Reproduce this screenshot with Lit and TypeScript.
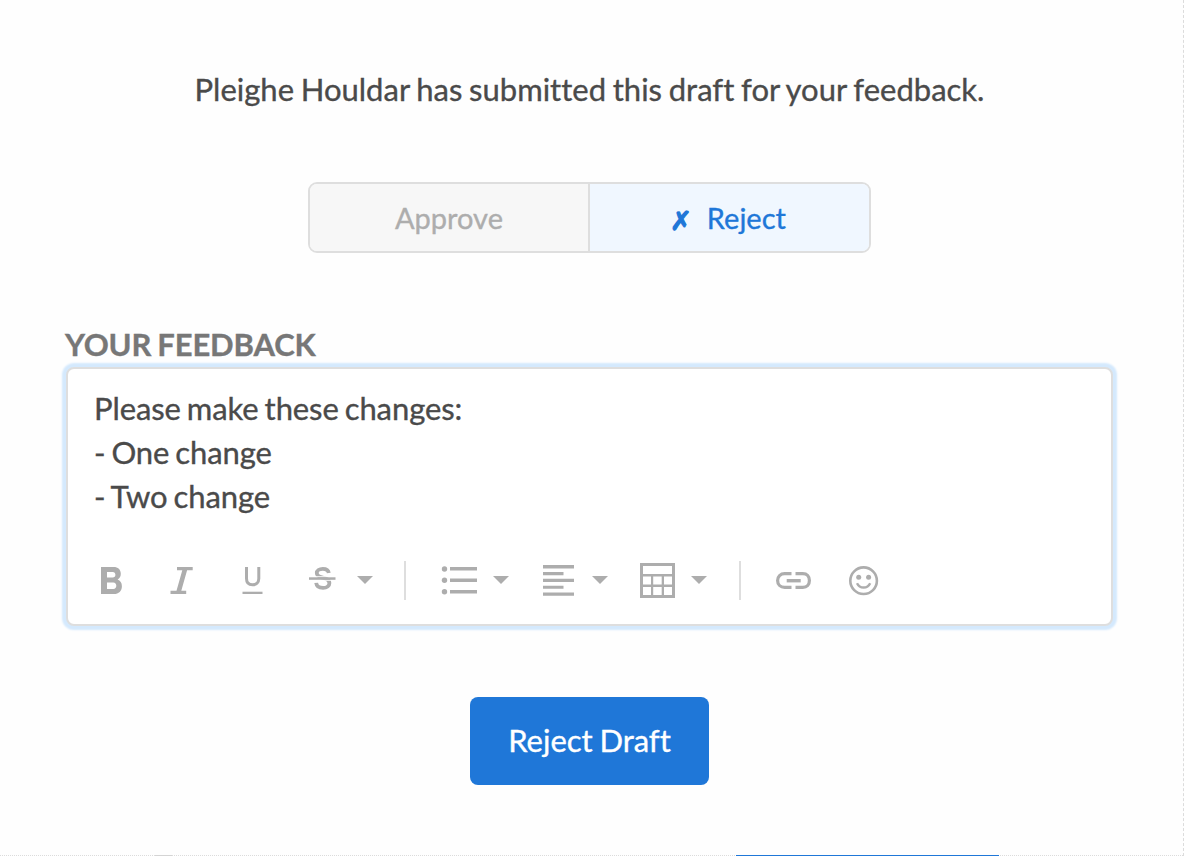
import { LitElement, html, svg, css, type TemplateResult, type SVGTemplateResult } from 'lit';
import { customElement, state } from 'lit/decorators.js';

type Decision = 'approve' | 'reject';

interface Tool {
  name: string;
  icon: SVGTemplateResult;
  menu?: boolean;
}

// Icons are drawn on a 36x40 grid
const BOLD: Tool = {
  name: 'Bold',
  icon: svg`<path fill-rule="evenodd" d="M6 7h12.5c4.600 0 7.300 2.600 7.300 6.700 0 2.700-1.200 4.700-3.200 5.900 2.700 1.100 4.300 3.300 4.300 6.600 0 4.700-3.100 7.800-8 7.800H6zM12 12v5.500h5.700c1.700 0 2.700-1 2.700-2.700s-1-2.800-2.700-2.800zM12 22.500v6.500h6.300c1.900 0 3-1.200 3-3.200s-1.100-3.300-3-3.300z"/>`
};

const ITALIC: Tool = {
  name: 'Italic',
  icon: svg`<path d="M12 7h15.700v3.300h-5.600l-5.800 20.400h4.900V34H5.500v-3.300h6l5.800-20.400H12z"/>`
};

const UNDERLINE: Tool = {
  name: 'Underline',
  icon: svg`
    <path class="stroke" stroke-width="3" d="M11.500 7v11.500c0 4 2.300 6.300 6 6.300s6.300-2.300 6.300-6.300V7"/>
    <path d="M7.500 31.700h20v2.300h-20z"/>`
};

const STRIKE: Tool = {
  name: 'Strikethrough',
  menu: true,
  icon: svg`
    <path class="stroke" stroke-width="3.800" d="M23.800 13c-.400-2.700-2.700-4.200-6-4.200-3.500 0-6 1.700-6 4.200 0 2.200 1.500 3.500 5 4.400l3.300 1c3.200 1 4.300 2.400 4.300 4.500 0 3-2.600 5-6.300 5-4 0-6.600-2-6.900-5"/>
    <path class="gap" d="M4 16.300h26v1H4zM4 19.800h26v1H4z"/>
    <path d="M4 17.300h26.500v2.500H4z"/>`
};

const LIST: Tool = {
  name: 'List',
  menu: true,
  icon: svg`
    <circle cx="3.500" cy="9" r="2.700"/><circle cx="3.500" cy="20.200" r="2.700"/><circle cx="3.500" cy="31.700" r="2.700"/>
    <path d="M9 7h27v3.500H9zM9 18.500h27v3.500H9zM9 30h27v3.500H9z"/>`
};

const ALIGN: Tool = {
  name: 'Align',
  menu: true,
  icon: svg`<path d="M3 5h31v3.500H3zM3 12h20.500v3.200H3zM3 18.800h31v3.200H3zM3 25.700h20.500v3H3zM3 32.400h31v3.300H3z"/>`
};

const TABLE: Tool = {
  name: 'Table',
  menu: true,
  icon: svg`<path fill-rule="evenodd" d="M1 3h35v35H1zM4 6v8h29V6zM4 16.500v8h8v-8zM14.200 16.500v8h8.500v-8zM25 16.500v8h8v-8zM4 27v8h8v-8zM14.200 27v8h8.500v-8zM25 27v8h8v-8z"/>`
};

const LINK: Tool = {
  name: 'Link',
  icon: svg`
    <path class="stroke" stroke-width="3.200" d="M15.500 13.600H8.700c-4.300 0-7.100 2.900-7.100 6.900s2.800 6.900 7.100 6.900h6.800M19.500 13.600h7.300c4.300 0 6.600 2.900 6.600 6.900s-2.300 6.900-6.600 6.900h-7.300"/>
    <path d="M10.700 19h14v3.400h-14z"/>`
};

const EMOJI: Tool = {
  name: 'Emoji',
  icon: svg`
    <circle class="stroke" stroke-width="2.600" cx="17.600" cy="20.700" r="13.300"/>
    <circle cx="12.700" cy="17.200" r="2.500"/><circle cx="22.600" cy="17.200" r="2.500"/>
    <path class="stroke" stroke-width="2.400" d="M11 23.200c1.400 2.900 3.700 4.300 6.600 4.300s5.200-1.400 6.600-4.300"/>`
};

/**
 * Review form for a submitted draft: approve/reject toggle, feedback editor
 * and the submit button.
 */
@customElement('app-root')
export class DraftReviewElement extends LitElement {
  @state()
  private _decision: Decision = 'reject';

  @state()
  private _lines = ['Please make these changes:', '- One change', '- Two change'];

  private _choose(decision: Decision) {
    this._decision = decision;
  }

  // ========================================
  // Render Methods
  // ========================================

  private _renderChoice(decision: Decision, label: string): TemplateResult {
    const selected = this._decision === decision;
    return html`
      <button
        class="choice ${selected ? 'selected' : ''}"
        aria-pressed=${selected}
        @click=${() => this._choose(decision)}
      >${selected ? html`<span class="mark">${decision === 'reject' ? '✗' : '✓'}</span>` : ''}<span>${label}</span></button>
    `;
  }

  private _renderTool(tool: Tool): TemplateResult {
    return html`
      <button class="tool ${tool.menu ? 'menu' : ''}" aria-label=${tool.name}>
        <svg width="36" height="40" viewBox="0 0 36 40">${tool.icon}</svg>
        ${tool.menu ? html`
          <svg class="caret" width="16" height="8" viewBox="0 0 16 8"><path d="M0 0h16L8 8z"/></svg>
        ` : ''}
      </button>
    `;
  }

  private _renderToolbar(): TemplateResult {
    return html`
      <div class="toolbar" role="toolbar">
        ${[BOLD, ITALIC, UNDERLINE, STRIKE].map(t => this._renderTool(t))}
        <span class="separator"></span>
        ${[LIST, ALIGN, TABLE].map(t => this._renderTool(t))}
        <span class="separator"></span>
        ${[LINK, EMOJI].map(t => this._renderTool(t))}
      </div>
    `;
  }

  override render() {
    return html`
      <main class="panel">
        <p class="intro">Pleighe Houldar has submitted this draft for your feedback.</p>
        <div class="choices">
          ${this._renderChoice('approve', 'Approve')}
          ${this._renderChoice('reject', 'Reject')}
        </div>
        <section class="feedback">
          <h2>YOUR FEEDBACK</h2>
          <div class="editor">
            <div class="text">${this._lines.map(line => html`<div>${line}</div>`)}</div>
            ${this._renderToolbar()}
          </div>
        </section>
        <button class="submit">${this._decision === 'reject' ? 'Reject Draft' : 'Approve Draft'}</button>
      </main>
      <footer class="tabs"><span class="tab"></span><span class="active-tab"></span></footer>
    `;
  }

  // ========================================
  // Styles
  // ========================================

  static override styles = css`
    :host {
      display: flex;
      flex-direction: column;
      box-sizing: border-box;
      width: 1184px;
      height: 856px;
      overflow: hidden;
      background: #fefefe;
      border-right: 1px dashed #dcdcdc;
      font-family: Lato, sans-serif;
      font-size: 31px;
      word-spacing: -1.2px;
      font-variant-ligatures: none;
      -webkit-text-stroke: 0.35px currentColor;
      color: #4a4a4a;
    }

    button {
      font: inherit;
      letter-spacing: inherit;
      word-spacing: inherit;
      border: none;
      cursor: pointer;
    }

    .panel {
      flex: 1;
      display: flex;
      flex-direction: column;
      align-items: center;
      box-sizing: border-box;
      padding: 67px 70px 0 66px;
    }

    .intro {
      margin: 0;
      line-height: 44px;
      white-space: nowrap;
    }

    /* Approve / reject toggle */
    .choices {
      display: flex;
      box-sizing: border-box;
      width: 563px;
      height: 71px;
      margin-top: 71px;
      border: 2px solid #dedede;
      border-radius: 9px;
      overflow: hidden;
    }

    .choice {
      flex: 0 0 278px;
      display: flex;
      align-items: center;
      justify-content: center;
      gap: 15px;
      padding: 0;
      background: #f7f7f7;
      color: #adadad;
      font-size: 29px;
    }

    .choice + .choice {
      flex: 1;
      padding-right: 3px;
      border-left: 2px solid #dedede;
    }

    .choice.selected {
      background: #f0f7ff;
      color: #1f77d8;
    }

    .mark {
      padding-top: 6px;
      font-family: "DejaVu Sans", sans-serif;
      font-size: 26px;
      -webkit-text-stroke-width: 1.2px;
    }

    /* Feedback editor */
    .feedback {
      width: 1047px;
      margin-top: 72px;
    }

    h2 {
      margin: 0 0 0 -1px;
      height: 42px;
      line-height: 38px;
      font-size: 31px;
      font-weight: 700;
      letter-spacing: -0.15px;
      color: #777;
    }

    .editor {
      box-sizing: border-box;
      height: 259px;
      padding: 17px 27px 0;
      background: #fff;
      border: 2px solid #dedede;
      border-radius: 8px;
      box-shadow: 0 0 2px 4px #d4e9fd;
    }

    .text {
      height: 174px;
      margin-left: -1px;
      line-height: 44px;
      letter-spacing: -0.1px;
      word-spacing: -1.8px;
    }

    .toolbar {
      display: flex;
      gap: 34px;
    }

    .tool {
      display: flex;
      align-items: center;
      gap: 16px;
      padding: 0;
      background: none;
      fill: #adadad;
    }

    .tool.menu {
      margin-right: -3px;
    }

    .stroke {
      fill: none;
      stroke: #adadad;
    }

    .gap {
      fill: #fff;
    }

    .separator {
      width: 2px;
      height: 39px;
      margin: 1px 1px 0 0;
      background: #dedede;
    }

    .separator:last-of-type {
      margin-left: 1px;
    }

    .submit {
      width: 239px;
      height: 88px;
      margin-top: 71px;
      padding: 0 0 2px;
      border-radius: 8px;
      background: #1f77d8;
      color: #fff;
    }

    /* Top edge of the tab strip below the panel */
    .tabs {
      display: flex;
      height: 0;
      border-bottom: 1px dotted #dcdcdc;
    }

    .tab {
      width: 17px;
      height: 1px;
      margin-left: 155px;
      background: #d4d4d4;
    }

    .active-tab {
      width: 263px;
      height: 1px;
      margin-left: 564px;
      background: #1f77d8;
    }
  `;
}
